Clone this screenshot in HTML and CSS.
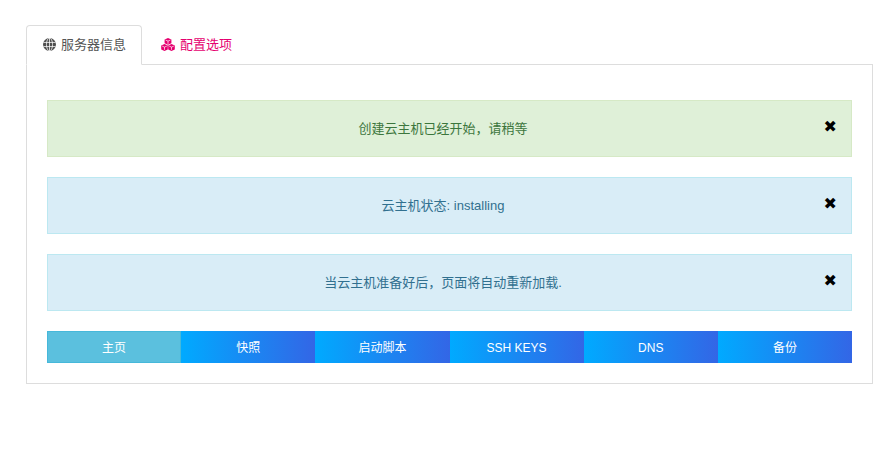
FILE: index.html
```html
<!DOCTYPE html>
<html lang="zh-CN">
<head>
<meta charset="utf-8">
<title>服务器信息</title>
<link rel="stylesheet" href="styles.css">
</head>
<body>
<div class="page">
  <ul class="tabs">
    <li class="tab active">
      <svg class="icon" viewBox="0 0 12 12" aria-hidden="true">
        <circle cx="6" cy="6" r="6" fill="#4d4d4d"/>
        <path d="M.4 4.1h11.2M.4 7.9h11.2M6 0v12" stroke="#fff" stroke-width=".7" fill="none"/>
        <ellipse cx="6" cy="6" rx="2.8" ry="6" stroke="#fff" stroke-width=".7" fill="none"/>
      </svg>
      <span>服务器信息</span>
    </li>
    <li class="tab link">
      <svg class="icon cubes" viewBox="0 0 14 13" aria-hidden="true">
        <path d="M7 0l3.4 1.4v3.8L7 6.7 3.6 5.2V1.4z" fill="#e5006f"/>
        <path d="M3.5 6l3.3 1.4v4L3.5 13 .2 11.4v-4z" fill="#e5006f"/>
        <path d="M10.5 6l3.3 1.4v4L10.5 13l-3.3-1.6v-4z" fill="#e5006f"/>
        <path d="M4.6 2.1L7 3.1l2.4-1M7 3.1v2.8M1.2 8.1l2.3 1 2.3-1M3.5 9.1v2.7M8.2 8.1l2.3 1 2.3-1M10.5 9.1v2.7" stroke="#fff" stroke-width=".7" fill="none"/>
      </svg>
      <span>配置选项</span>
    </li>
  </ul>
  <div class="panel">
    <div class="alert success"><span>创建云主机已经开始，请稍等</span><span class="close">✖</span></div>
    <div class="alert info"><span>云主机状态: installing</span><span class="close">✖</span></div>
    <div class="alert info"><span>当云主机准备好后，页面将自动重新加载.</span><span class="close">✖</span></div>
    <div class="buttons">
      <a class="btn home">主页</a>
      <a class="btn">快照</a>
      <a class="btn">启动脚本</a>
      <a class="btn">SSH KEYS</a>
      <a class="btn">DNS</a>
      <a class="btn">备份</a>
    </div>
  </div>
</div>
</body>
</html>
```
FILE: styles.css
```css
* { box-sizing: border-box; }
html, body { margin: 0; background: #fff; }
body {
  font-family: "Liberation Sans", "Noto Sans CJK SC", sans-serif;
  font-size: 13px;
  line-height: 20px;
  color: #555;
}
.page { padding: 25px 17px 0 26px; }
.tabs {
  display: flex;
  list-style: none;
  margin: 0 0 -1px;
  padding: 0;
  position: relative;
  z-index: 1;
}
.tab {
  height: 40px;
  display: flex;
  align-items: center;
  gap: 5px;
  padding: 0 15px 1px 16px;
  border: 1px solid transparent;
  border-radius: 4px 4px 0 0;
}
.tab.active {
  width: 116px;
  background: #fff;
  border-color: #ddd #ddd #fff;
}
.tab.link { color: #e5006f; padding: 0 0 1px 18px; }
.icon { width: 13px; height: 13px; flex: none; }
.cubes { width: 14px; }
.panel {
  height: 320px;
  border: 1px solid #ddd;
  padding: 35px 20px 0;
}
.alert {
  position: relative;
  height: 57px;
  margin-bottom: 20px;
  display: flex;
  align-items: center;
  justify-content: center;
  border: 1px solid;
  padding: 0 13px 0 0;
}
.alert.success { background: #dff0d8; border-color: #d6e9c6; color: #3c763d; }
.alert.info { background: #d9edf7; border-color: #bce8f1; color: #31708f; }
.close {
  position: absolute;
  right: 14px;
  top: 50%;
  transform: translateY(-50%);
  margin-top: -2px;
  font-size: 16px;
  line-height: 1;
  color: #000;
  font-family: "DejaVu Sans", sans-serif;
}
.buttons { display: grid; grid-template-columns: repeat(6, 1fr); height: 32px; }
.btn {
  display: flex;
  align-items: center;
  justify-content: center;
  padding-top: 1px;
  font-size: 12px;
  color: #fff;
  background: linear-gradient(90deg, #00aaff, #3366e6);
}
.btn.home {
  background: #5bc0de;
  border: 1px solid #46b8da;
}
```
